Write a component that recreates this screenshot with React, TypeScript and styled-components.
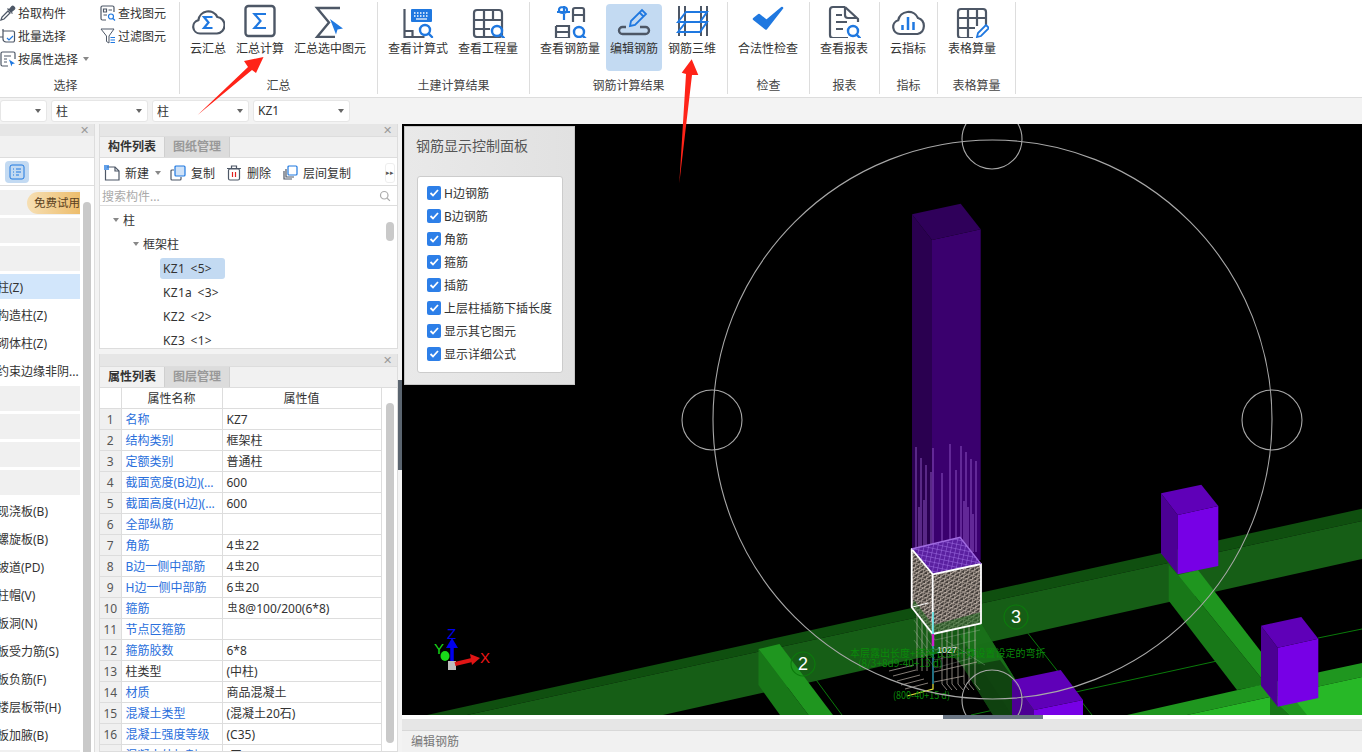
import styled, { createGlobalStyle } from "styled-components";
import type { ReactNode } from "react";

const GRAY = "#4d5766";
const BLUE = "#1f78e0";

const GlobalStyle = createGlobalStyle`
  html, body, #root {
    margin: 0;
    padding: 0;
    height: 100%;
  }
  body {
    overflow: hidden;
    background: #f3f3f3;
    color: #333;
    font-family: "Noto Sans", "Noto Sans CJK SC", sans-serif;
    font-size: 12px;
  }
`;

/* ---------- ribbon icons ---------- */

const Glass = ({ x, y }: { x: number; y: number }) => (
  <g fill="#fff" stroke={BLUE} strokeWidth="2.4">
    <circle cx={x} cy={y} r="5" />
    <path d={`M${x + 3.6} ${y + 3.6}l3.4 3.4`} strokeLinecap="round" />
  </g>
);

const Svg = ({ children }: { children: ReactNode }) => (
  <svg width="34" height="34" viewBox="0 0 34 34" fill="none" stroke={GRAY} strokeWidth="2.2">
    {children}
  </svg>
);

const CloudSumIcon = () => (
  <Svg>
    <path d="M9 29.5a6.8 6.8 0 0 1-1.600-13.400A10 10 0 0 1 26.300 13 8.300 8.300 0 0 1 26 29.500Z" />
    <path d="M21.500 13h-8.500l4.500 5.500-4.500 5.500h8.500" stroke={BLUE} />
  </Svg>
);

const SumIcon = () => (
  <Svg>
    <rect x="2.500" y="2" width="29" height="30" rx="3" strokeWidth="2.400" />
    <path d="M23 10H11.500l6 7-6 7H23" stroke={BLUE} />
  </Svg>
);

const SumSelectedIcon = () => (
  <Svg>
    <path d="M27 4H4l12 14.500L4 33h18" strokeWidth="2.400" />
    <path d="M17 17l13 9.500-5.500 1-1.500 5Z" fill={BLUE} stroke="none" transform="translate(0 -2)" />
  </Svg>
);

const FormulaIcon = () => (
  <Svg>
    <path d="M3.500 5v28h20M3.500 27h8v6" />
    <rect x="10" y="5" width="21" height="13" rx="1" fill={BLUE} stroke="none" />
    <path d="M13 9h15M13 12h15" stroke="#fff" strokeWidth="1.300" strokeDasharray="1.500 1.500" />
    <path d="M15 15h11" stroke="#fff" strokeWidth="1.200" />
    <Glass x={24} y={26} />
  </Svg>
);

const QuantityIcon = () => (
  <Svg>
    <rect x="3" y="6" width="28" height="27" rx="3" />
    <path d="M3 16h28M3 25h16M13 6v27M22 6v10" />
    <Glass x={26} y={27} />
  </Svg>
);

const RebarQtyIcon = () => (
  <Svg>
    <path d="M3 22h13v13M3 22v12h13M3 28h13" />
    <path d="M20 18V6a2 2 0 0 1 2-2h7a2 2 0 0 1 2 2v12M20 11h11" />
    <path d="M11 2v14M4 8h13M6 6c0-4 8-4 8 0s-8 4-8 0Z" stroke={BLUE} strokeWidth="2.200" />
    <Glass x={26} y={28} />
  </Svg>
);

const EditRebarIcon = () => (
  <Svg>
    <path d="M9 24H5.500a3.500 3.500 0 0 0 0 7h23a3.500 3.500 0 0 0 0-7H23" strokeWidth="2.400" transform="translate(0 -1)" />
    <path d="M13 22l1-5L25 6l4 4-11 11ZM22.500 8.500l4 4" stroke={BLUE} strokeWidth="1.800" />
  </Svg>
);

const Rebar3dIcon = () => (
  <Svg>
    <path d="M4 2v30M10 2v8M10 26v6M26 2v30M32 2v30M10 10v16" strokeWidth="2" />
    <path d="M3 18L11 8h21l-7 10ZM3 28l8-10h21l-7 10Z" stroke={BLUE} strokeWidth="2" />
  </Svg>
);

const CheckIcon = () => (
  <Svg>
    <path d="M3 15l12 9.500L31 4 15.500 17 8 11Z" fill={BLUE} stroke={BLUE} strokeWidth="2.500" strokeLinejoin="round" />
  </Svg>
);

const ReportIcon = () => (
  <Svg>
    <path d="M18 3H6a3 3 0 0 0-3 3v25a3 3 0 0 0 3 3h15M18 3l13 12v3M18 3v8a3 3 0 0 0 3 3h9" />
    <path d="M9 11h6M9 18h11M9 25h7" strokeWidth="2" />
    <Glass x={26} y={27} />
  </Svg>
);

const CloudBarsIcon = () => (
  <Svg>
    <path d="M9 30a7 7 0 0 1-1.800-13.700A10.500 10.500 0 0 1 27 14a8.300 8.300 0 0 1-.5 16Z" />
    <path d="M11.500 26v-5M17 26V13M22.500 26v-8" stroke={BLUE} strokeWidth="2.500" />
  </Svg>
);

const SheetIcon = () => (
  <Svg>
    <path d="M31 22V8a3 3 0 0 0-3-3H6a3 3 0 0 0-3 3v23a3 3 0 0 0 3 3h12M3 14h28M3 24h17M13 5v29M22 5v17" />
    <path d="M22 33l1-4 8-8 3 3-8 8Z" fill="#fff" stroke={BLUE} strokeWidth="1.800" />
  </Svg>
);

/* ---------- small icons ---------- */

const Mini = ({ children, size = 16 }: { children: ReactNode; size?: number }) => (
  <svg width={size} height={size} viewBox="0 0 16 16" fill="none" stroke={GRAY} strokeWidth="1.200">
    {children}
  </svg>
);

const PickIcon = () => (
  <Mini>
    <path d="M1 15l1-3 6-6 2 2-6 6Z" strokeWidth="1.300" />
    <path d="M7.500 3.500l5 5M9 5l3-3.500c1-1 3.500 1.500 2.500 2.500L11 7" fill={GRAY} />
  </Mini>
);
const BatchIcon = () => (
  <Mini>
    <path d="M3 3h10a1.500 1.500 0 0 1 1.500 1.500v8A1.500 1.500 0 0 1 13 14H6a3 3 0 0 1-3-3V3Z" />
    <path d="M0 9h3M3 3V1" />
    <path d="M7 10l2 2 4-4" stroke={BLUE} />
  </Mini>
);
const AttrIcon = () => (
  <Mini>
    <path d="M8 15H2.500A1.500 1.500 0 0 1 1 13.500v-11A1.500 1.500 0 0 1 2.500 1h11A1.500 1.500 0 0 1 15 2.500V8" />
    <path d="M4 5h7M4 8h3M4 11h3" />
    <path d="M9 8.500l6 4-2.700.5-.8 2.500Z" fill={BLUE} stroke="none" />
  </Mini>
);
const FindIcon = () => (
  <Mini>
    <path d="M6 15H2.500A1.500 1.500 0 0 1 1 13.500v-11A1.500 1.500 0 0 1 2.500 1h10A1.500 1.500 0 0 1 14 2.500V7" />
    <path d="M3.500 4h3v3h-3ZM8.500 5H12M3.500 10H7" />
    <circle cx="11" cy="11.500" r="2.500" stroke={BLUE} />
    <path d="M13 13.500l2 2" stroke={BLUE} />
  </Mini>
);
const FilterIcon = () => (
  <Mini>
    <path d="M1 1h13L9 8v7l-2.500-1.500V8Z" strokeWidth="1" />
    <path d="M10.500 9.500H15M10.500 12H15M10.500 14.500H15" stroke={BLUE} />
  </Mini>
);
const NewIcon = () => (
  <Mini>
    <path d="M3 2h8l4 4v9H1.500V5" />
    <path d="M11 2v4h4" />
    <path d="M0 0h5v5H0Z" fill={BLUE} stroke="none" opacity="0.7" />
  </Mini>
);
const CopyIcon = () => (
  <Mini>
    <path d="M4 5H2a1 1 0 0 0-1 1v8a1 1 0 0 0 1 1h8a1 1 0 0 0 1-1v-2" />
    <rect x="5" y="1" width="10" height="10" rx="1" fill="#cfe2f8" stroke={BLUE} />
  </Mini>
);
const TrashIcon = () => (
  <Mini>
    <rect x="2.500" y="4" width="11" height="11" rx="1.500" />
    <path d="M1 3.500h14M5.500 3V1h5v2" />
    <path d="M6.500 7v5M9.500 7v5" stroke="#e02020" />
  </Mini>
);
const FloorCopyIcon = () => (
  <Mini>
    <path d="M2 6v8h8M4 4v8h8" />
    <rect x="6" y="1" width="9" height="9" rx="1" fill="#fff" stroke={BLUE} />
  </Mini>
);
const SearchGlass = () => (
  <Mini size={12}>
    <circle cx="7" cy="7" r="5" stroke="#aaa" strokeWidth="1.600" />
    <path d="M11 11l3.500 3.500" stroke="#aaa" strokeWidth="1.600" />
  </Mini>
);
const ListIcon = () => (
  <svg width="16" height="16" viewBox="0 0 16 16" fill="none" stroke={BLUE} strokeWidth="1">
    <rect x="1" y="1" width="14" height="14" rx="2" />
    <path d="M4 5h1M7 5h5M4 8h1M7 8h5M4 11h1M7 11h3" />
  </svg>
);

/* ---------- page ---------- */

const Page = styled.div`
  position: relative;
  display: flex;
  flex-direction: column;
  width: 1362px;
  height: 752px;
  overflow: hidden;
`;

const Ribbon = styled.div`
  display: flex;
  height: 95px;
  padding-top: 2px;
  background: #fff;
  border-bottom: 1px solid #ddd;
  box-sizing: content-box;
`;

const Group = styled.div<{ $width: number }>`
  display: flex;
  flex-direction: column;
  box-sizing: border-box;
  width: ${({ $width }) => $width}px;
  height: 92px;
  padding: 0 6px;
  border-right: 1px solid #ddd;
`;

const GroupItems = styled.div`
  display: flex;
  gap: 2px;
  height: 70px;
  padding-top: 2px;
  flex: none;
`;

const GroupLabel = styled.div<{ $shift?: number }>`
  margin-top: 4px;
  margin-right: ${({ $shift }) => $shift ?? 0}px;
  height: 16px;
  line-height: 16px;
  text-align: center;
  color: #444;
  white-space: nowrap;
`;

const RibbonButton = styled.div<{ $active?: boolean }>`
  display: flex;
  flex-direction: column;
  align-items: center;
  height: 67px;
  padding: 0 4px;
  border-radius: 4px;
  background: ${({ $active }) => ($active ? "#c3daf2" : "transparent")};
  white-space: nowrap;
  & > span {
    margin-top: 3px;
    line-height: 16px;
  }
  & > svg {
    flex: none;
  }
`;

const PickGrid = styled.div`
  display: grid;
  grid-template-columns: 100px 66px;
  grid-auto-rows: 23px;
  margin: -3px 0 0 -6px;
  height: 71px;
  align-content: start;
`;

const PickItem = styled.div<{ $wide?: boolean }>`
  display: flex;
  align-items: center;
  gap: 2px;
  height: 23px;
  white-space: nowrap;
  ${({ $wide }) => $wide && "grid-column: 1 / 3;"}
`;

const Caret = styled.i<{ $color?: string }>`
  display: inline-block;
  flex: none;
  width: 0;
  height: 0;
  border-left: 3px solid transparent;
  border-right: 3px solid transparent;
  border-top: 4px solid ${({ $color }) => $color ?? "#888"};
`;

const ToolCaret = styled(Caret)`
  margin-right: 9px;
`;

const SelectBar = styled.div`
  display: flex;
  align-items: center;
  gap: 4px;
  height: 26px;
  flex: none;
  padding-bottom: 1px;
  box-sizing: border-box;
  background: #f3f3f3;
`;

const Select = styled.div<{ $width: number }>`
  display: flex;
  align-items: center;
  justify-content: space-between;
  box-sizing: border-box;
  width: ${({ $width }) => $width}px;
  height: 22px;
  padding: 0 5px 0 4px;
  background: #fff;
  border: 1px solid #e6e6e6;
  border-radius: 3px;
`;

const Workspace = styled.div`
  display: flex;
  flex: 1;
  min-height: 0;
  gap: 4px;
`;

const LeftColumn = styled.div`
  position: relative;
  display: flex;
  flex-direction: column;
  flex: none;
  width: 95px;
  background: #fff;
  border-right: 1px solid #ddd;
  box-sizing: border-box;
  overflow: hidden;
`;

const PanelHead = styled.div`
  display: flex;
  align-items: center;
  justify-content: flex-end;
  flex: none;
  height: 12px;
  padding-right: 5px;
  background: #e6e6e6;
  color: #999;
`;

const CloseMark = styled.span`
  font-size: 11px;
  line-height: 12px;
  font-family: "Liberation Sans", sans-serif;
`;

const LeftBlank = styled.div`
  flex: none;
  height: 22px;
  background: #f1f1f1;
  border-bottom: 1px solid #ddd;
  box-sizing: border-box;
`;

const LeftTools = styled.div`
  display: flex;
  align-items: center;
  flex: none;
  height: 28px;
  padding-left: 5px;
  border-bottom: 1px solid #ddd;
  box-sizing: border-box;
`;

const ToolChip = styled.div`
  display: flex;
  align-items: center;
  justify-content: center;
  width: 24px;
  height: 22px;
  background: #c3daf2;
  border-radius: 4px;
`;

const NavList = styled.div`
  display: flex;
  flex-direction: column;
  gap: 3px;
  width: 80px;
  padding-top: 4px;
  overflow: hidden;
`;

const NavRow = styled.div<{ $tone?: "blank" | "active" }>`
  display: flex;
  align-items: center;
  flex: none;
  justify-content: space-between;
  height: 25px;
  white-space: nowrap;
  overflow: hidden;
  background: ${({ $tone }) =>
    $tone === "blank" ? "#f0f0f0" : $tone === "active" ? "#d2e6fb" : "#fff"};
  & > span {
    margin-left: -3px;
  }
`;

const TrialPill = styled.div`
  margin-left: auto;
  width: 53px;
  height: 22px;
  line-height: 21px;
  text-align: right;
  font-size: 11.500px;
  border-radius: 11px 0 0 11px;
  background: linear-gradient(90deg, #f6dfb4, #edbd6c);
  color: #5b4120;
  overflow: hidden;
`;

const ScrollThumb = styled.div<{ $top: number; $left: number; $height: number }>`
  position: absolute;
  top: ${({ $top }) => $top}px;
  left: ${({ $left }) => $left}px;
  width: 8px;
  height: ${({ $height }) => $height}px;
  background: #c9c9c9;
  border-radius: 4px;
`;

const MiddleColumn = styled.div`
  display: flex;
  flex-direction: column;
  flex: none;
  width: 299px;
  gap: 5px;
`;

const Panel = styled.div<{ $height?: number }>`
  position: relative;
  display: flex;
  flex-direction: column;
  background: #fff;
  border-right: 1px solid #ddd;
  border-left: 1px solid #ddd;
  border-bottom: 1px solid #ddd;
  box-sizing: border-box;
  overflow: hidden;
  ${({ $height }) => ($height ? `flex: none; height: ${$height}px;` : "flex: 1; min-height: 0;")}
`;

const Tabs = styled.div`
  display: flex;
  flex: none;
  height: 22px;
  background: #f1f1f1;
  border-top: 1px solid #ddd;
  border-bottom: 1px solid #ddd;
  box-sizing: border-box;
`;

const Tab = styled.div<{ $active?: boolean }>`
  width: 65px;
  line-height: 20px;
  text-align: center;
  font-weight: 700;
  color: ${({ $active }) => ($active ? "#333" : "#999")};
  background: ${({ $active }) => ($active ? "#f1f1f1" : "#dcdcdc")};
  border-right: 1px solid #cfcfcf;
  box-sizing: border-box;
`;

const ListTools = styled.div`
  display: flex;
  align-items: center;
  flex: none;
  height: 28px;
  padding: 2px 0 0 4px;
  border-bottom: 1px solid #ddd;
  box-sizing: border-box;
`;

const ListTool = styled.div<{ $gap: number }>`
  display: flex;
  align-items: center;
  gap: 5px;
  margin-right: ${({ $gap }) => $gap}px;
  white-space: nowrap;
`;

const MoreTools = styled.div`
  margin-left: auto;
  margin-right: 2px;
  width: 10px;
  height: 20px;
  line-height: 18px;
  text-align: center;
  font-size: 7px;
  color: #555;
  border: 1px solid #eee;
  border-radius: 3px;
  box-sizing: border-box;
`;

const SearchRow = styled.div`
  display: flex;
  align-items: center;
  justify-content: space-between;
  flex: none;
  height: 19px;
  padding: 0 6px 0 2px;
  color: #aaa;
  border-bottom: 1px solid #ddd;
  box-sizing: content-box;
`;

const Tree = styled.div`
  flex: 1;
  min-height: 0;
  padding-top: 2px;
  overflow: hidden;
`;

const TreeRow = styled.div<{ $indent: number }>`
  display: flex;
  align-items: center;
  gap: 4px;
  height: 24px;
  padding-left: ${({ $indent }) => $indent}px;
`;

const TreeLeaf = styled.div<{ $selected?: boolean }>`
  box-sizing: border-box;
  height: 21px;
  line-height: 21px;
  margin-left: -3px;
  width: 65px;
  padding-left: 3px;
  border-radius: 3px;
  letter-spacing: 0.300px;
  word-spacing: 2px;
  white-space: nowrap;
  background: ${({ $selected }) => ($selected ? "#c3daf2" : "transparent")};
`;

const PropsTable = styled.table`
  width: 281px;
  border-collapse: collapse;
  table-layout: fixed;
`;

const Col = styled.col<{ $width: number }>`
  width: ${({ $width }) => $width}px;
`;

const HeadCell = styled.th`
  height: 20px;
  padding: 0;
  font-weight: 400;
  text-align: center;
  border-right: 1px solid #ddd;
  border-bottom: 1px solid #ddd;
`;

const IndexCell = styled.td`
  height: 20px;
  padding: 0;
  text-align: center;
  color: #555;
  background: #f0f0f0;
  border-right: 1px solid #ddd;
  border-bottom: 1px solid #ddd;
`;

const NameCell = styled.td<{ $plain?: boolean }>`
  height: 20px;
  padding: 0 3px 0 4px;
  white-space: nowrap;
  overflow: hidden;
  text-overflow: ellipsis;
  color: ${({ $plain }) => ($plain ? "#333" : "#2a6fdc")};
  border-right: 1px solid #ddd;
  border-bottom: 1px solid #ddd;
`;

const ValueCell = styled.td`
  height: 20px;
  padding: 0 3px 0 4px;
  white-space: nowrap;
  overflow: hidden;
  border-right: 1px solid #ddd;
  border-bottom: 1px solid #ddd;
`;

const SteelMark = styled.span`
  font-size: 10px;
  position: relative;
  top: -2px;
  margin: 0 1px;
`;

const SplitterV = styled.div`
  position: absolute;
  left: -4px;
  top: 256px;
  width: 4px;
  height: 90px;
  background: #5b6570;
`;

const RightColumn = styled.div`
  position: relative;
  display: flex;
  flex-direction: column;
  flex: 1;
  min-width: 0;
`;

const Viewport = styled.div`
  flex: none;
  height: 591px;
  background: #000;
  & > svg {
    display: block;
  }
`;

const SplitterH = styled.div`
  position: absolute;
  left: 541px;
  top: 591px;
  width: 100px;
  height: 4px;
  background: #6b7785;
`;

const BottomGap = styled.div`
  flex: none;
  height: 4px;
  background: #fff;
`;

const BottomHead = styled.div`
  flex: none;
  height: 11px;
  background: #e6e6e6;
  border-bottom: 1px solid #d8d8d8;
  box-sizing: content-box;
`;

const BottomBody = styled.div`
  flex: 1;
  padding: 1px 9px;
  background: #f1f1f1;
  color: #777;
`;

const FloatPanel = styled.div`
  position: absolute;
  left: 2px;
  top: 2px;
  box-sizing: border-box;
  width: 171px;
  height: 259px;
  padding: 0 12px;
  background: linear-gradient(90deg, #e9e9e9, #e1e1e1);
  border: 1px solid #c8c8c8;
`;

const FloatTitle = styled.div`
  margin: 8px 0 0 -1px;
  height: 21px;
  line-height: 21px;
  font-size: 14px;
  color: #555;
`;

const CheckBox = styled.div`
  display: flex;
  flex-direction: column;
  gap: 4px;
  box-sizing: border-box;
  width: 146px;
  height: 197px;
  margin-top: 20px;
  padding: 6px 0 0 9px;
  background: #fff;
  border: 1px solid #ccc;
  border-radius: 3px;
`;

const CheckRow = styled.div`
  display: flex;
  align-items: center;
  gap: 3px;
  height: 19px;
  white-space: nowrap;
`;

const Tick = styled.div`
  display: flex;
  align-items: center;
  justify-content: center;
  width: 14px;
  height: 14px;
  background: #2d7fe8;
  border-radius: 2px;
`;

const ArrowOverlay = styled.svg`
  position: absolute;
  left: 0;
  top: 0;
  pointer-events: none;
`;

/* ---------- data ---------- */

const navRows: { label?: string; tone?: "blank" | "active"; trial?: boolean }[] = [
  { tone: "blank", trial: true },
  { tone: "blank" },
  { tone: "blank" },
  { label: "柱(Z)", tone: "active" },
  { label: "构造柱(Z)" },
  { label: "砌体柱(Z)" },
  { label: "约束边缘非阴..." },
  { tone: "blank" },
  { tone: "blank" },
  { tone: "blank" },
  { tone: "blank" },
  { label: "现浇板(B)" },
  { label: "螺旋板(B)" },
  { label: "坡道(PD)" },
  { label: "柱帽(V)" },
  { label: "板洞(N)" },
  { label: "板受力筋(S)" },
  { label: "板负筋(F)" },
  { label: "楼层板带(H)" },
  { label: "板加腋(B)" },
  { tone: "blank" },
];

const S = () => <SteelMark>虫</SteelMark>;

const props: { name: string; value?: ReactNode; plain?: boolean }[] = [
  { name: "名称", value: "KZ7" },
  { name: "结构类别", value: "框架柱" },
  { name: "定额类别", value: "普通柱" },
  { name: "截面宽度(B边)(mm)", value: "600" },
  { name: "截面高度(H边)(mm)", value: "600" },
  { name: "全部纵筋" },
  { name: "角筋", value: <>4<S />22</> },
  { name: "B边一侧中部筋", value: <>4<S />20</> },
  { name: "H边一侧中部筋", value: <>6<S />20</> },
  { name: "箍筋", value: <><S />8@100/200(6*8)</> },
  { name: "节点区箍筋" },
  { name: "箍筋胶数", value: "6*8" },
  { name: "柱类型", value: "(中柱)", plain: true },
  { name: "材质", value: "商品混凝土" },
  { name: "混凝土类型", value: "(混凝土20石)" },
  { name: "混凝土强度等级", value: "(C35)" },
  { name: "混凝土外加剂", value: "(无)" },
];

const checks = ["H边钢筋", "B边钢筋", "角筋", "箍筋", "插筋", "上层柱插筋下插长度", "显示其它图元", "显示详细公式"];

const leaves = ["KZ1 <5>", "KZ1a <3>", "KZ2 <2>", "KZ3 <1>"];

const rebarTops = [
  [916, 447], [921, 458], [926, 465], [931, 472], [933, 448], [942, 473], [950, 444],
  [956, 470], [961, 446], [966, 452], [971, 459], [976, 461], [919, 507], [924, 500],
  [964, 501], [968, 507], [973, 514],
];

const hooks = [
  [889, 671, 914, 665], [893, 676, 916, 670], [897, 681, 920, 675], [901, 685, 924, 679],
  [905, 689, 928, 683],
];

/* ---------- 3d view ---------- */

const Scene = () => (
  <svg width="960" height="591" viewBox="402 124 960 591">
    <defs>
      <pattern id="mesh" width="4.500" height="4.500" patternUnits="userSpaceOnUse" patternTransform="rotate(12)">
        <rect width="4.500" height="4.500" fill="#3f3a36" />
        <path d="M0 0H4.500M0 0V4.500M0 4.500L4.500 0" stroke="#c4b7ad" strokeWidth="1" />
      </pattern>
      <pattern id="meshTop" width="4.500" height="4.500" patternUnits="userSpaceOnUse" patternTransform="rotate(12)">
        <rect width="4.500" height="4.500" fill="#5a20a0" />
        <path d="M0 0H4.500M0 0V4.500" stroke="#a675ea" strokeWidth="0.900" />
      </pattern>
    </defs>

    {/* thin grid lines */}
    <g stroke="#0a7a0a" strokeWidth="1">
      <path d="M971 715L1217 661M1318 638L1362 629M1023 627L1092 715M811 673L842 715" />
    </g>

    {/* long beam */}
    <polygon points="427,715 1362,508.700 1362,521 467,715" fill="#0f4f0f" />
    <polygon points="467,715 1362,521 1362,559 663,715" fill="#165e16" />

    {/* cross beam under the cage */}
    <polygon points="933,634 981,623 1037,715 993,715 963,667" fill="#145914" opacity="0.900" />
    <polygon points="981,623 1037,715 1012,715 960,636" fill="#1b7a1b" opacity="0.700" />
    <polygon points="963,667 1000,660 1040,715 993,715" fill="#103f10" opacity="0.900" />

    {/* stub beam by axis 2 */}
    <polygon points="758.500,649 758.500,685 780,715 808.500,715" fill="#187818" />
    <polygon points="758.500,649 779.500,644 833,715 808.500,715" fill="#1f961f" />

    {/* cross beam by axis 4 */}
    <polygon points="1168.700,565 1168.700,600.700 1237,690 1262,685 1262,679 1178,575" fill="#187818" />
    <polygon points="1178,575 1198,570 1262,653 1262,679" fill="#1f961f" />

    {/* front beam */}
    <polygon points="1127,715 1260,685 1362,663 1362,677 1187,715" fill="#1f961f" />
    <polygon points="1187,715 1270,697 1362,677 1362,715" fill="#27b827" />
    <polygon points="1270,697 1270,715 1290,715 1277,703" fill="#187818" />
    <polygon points="1277,703 1290,715 1307,715 1295,700" fill="#1f961f" />

    {/* tall column */}
    <polygon points="912,214.300 932,240 932,560 912,560" fill="#2a0050" />
    <polygon points="932,240 980.700,229.300 980.700,560 932,560" fill="#3a006e" />
    <polygon points="912,214.300 960.700,203.700 980.700,229.300 932,240" fill="#2f005a" />
    <g stroke="#9a5fd0" strokeWidth="1" opacity="0.850">
      {rebarTops.map(([x, y]) => (
        <path key={`${x}-${y}`} d={`M${x} ${y}V552`} />
      ))}
    </g>

    {/* cage below the cube */}
    <g stroke="#b9aea6" strokeWidth="0.800" fill="none" opacity="0.900">
      {[917, 922, 927, 942, 947, 952, 958, 964, 969, 975].map((x) => (
        <path key={x} d={`M${x} 600V${x < 935 ? 665 : 684}l${x < 935 ? 0 : 5} 6`} />
      ))}
      <path d="M934 672L977 662M934 682L964 676" />
      {hooks.map(([a, b, c, d]) => (
        <path key={a} d={`M${a} ${b}L${c} ${d}`} />
      ))}
    </g>
    <g stroke="#cfd9cf" strokeWidth="0.600" fill="none" opacity="0.450">
      <path d="M914 610L935 640L980 630M914 620L935 650L976 640M914 630L935 660L975 650M914 640L935 668L972 658" />
      <path d="M945 640L985 665" />
    </g>

    {/* cube */}
    <polygon points="911.700,549 932.700,574.300 932.700,634 911.700,607.300" fill="url(#mesh)" />
    <polygon points="932.700,574.300 981,564 981,623.300 932.700,634" fill="url(#mesh)" />
    <polygon points="911.700,549 960,537.300 981,564 932.700,574.300" fill="url(#meshTop)" />
    <polygon points="914,600 933,625 981,612 981,623.300 932.700,634 911.700,607.300" fill="#1c6a1c" opacity="0.550" />
    <g fill="none" stroke="#fff" strokeWidth="1.800" strokeLinejoin="round">
      <path d="M911.700 607.300V549L932.700 574.300V634L911.700 607.300ZM932.700 574.300L981 564V623.300L932.700 634" />
      <path d="M911.700 607.300L928 603" strokeWidth="1" />
    </g>
    <path d="M911.700 549L960 537.300L981 564" fill="none" stroke="#a06be0" strokeWidth="1.400" />

    {/* centre line */}
    <path d="M933 612V634" stroke="#27e0e0" strokeWidth="1.200" />
    <path d="M933 634V646" stroke="#d020d0" strokeWidth="2.500" />
    <path d="M933 646V684" stroke="#35b7d8" strokeWidth="1.200" />
    <path d="M933 684V689L907 696" stroke="#e6e63a" strokeWidth="1.200" fill="none" />

    {/* labels */}
    <g fontFamily="Noto Sans CJK SC, sans-serif" fontSize="10" fill="#0a8a0a">
      <text x="850" y="657">本层露出长度+搭接长度计算设置设定的弯折</text>
      <text x="858" y="667">(8/3+8d9-40+13 d)</text>
      <text x="893" y="699" textLength="57" lengthAdjust="spacingAndGlyphs">(800-40+15 d)</text>
    </g>
    <text x="937" y="653" fontFamily="Liberation Sans, sans-serif" fontSize="9" fill="#ddd">1027</text>

    {/* axis numbers */}
    <g fill="none" stroke="#0c7a0c" strokeWidth="1.100">
      <circle cx="803" cy="664" r="12" />
      <circle cx="1016" cy="617" r="12" />
    </g>
    <g fontFamily="Liberation Sans, sans-serif" fontSize="18" fill="#fff" textAnchor="middle">
      <text x="803" y="670">2</text>
      <text x="1016" y="623">3</text>
    </g>

    {/* columns in front */}
    <polygon points="1161,493.300 1177.700,515 1177.700,574.300 1161,553.300" fill="#4c0094" />
    <polygon points="1177.700,515 1218.300,506 1218.300,566 1177.700,574.300" fill="#7700e6" />
    <polygon points="1161,493.300 1201.300,484.700 1218.300,506 1177.700,515" fill="#5f00b8" />
    <polygon points="1261,625.700 1277.700,647.700 1277.700,706.700 1261,685.700" fill="#4c0094" />
    <polygon points="1277.700,647.700 1318.300,638.700 1318.300,698 1277.700,706.700" fill="#7700e6" />
    <polygon points="1261,625.700 1301.300,617 1318.300,638.700 1277.700,647.700" fill="#5f00b8" />
    <polygon points="1012,680 1034,710 1034,715 1012,715" fill="#4c0094" />
    <polygon points="1034,710 1083,700 1083,715 1034,715" fill="#7700e6" />
    <polygon points="1012,680 1060.700,670 1083,700 1034,710" fill="#5f00b8" />

    {/* big circle and column markers, over everything */}
    <g fill="none" stroke="#a8a8a8" strokeWidth="1.100">
      <circle cx="992.500" cy="419.500" r="279.500" />
      <circle cx="992" cy="139" r="30" />
      <circle cx="712" cy="420" r="30" />
      <circle cx="1272" cy="420" r="30" />
      <circle cx="992" cy="700" r="30" />
    </g>

    {/* axis gizmo */}
    <rect x="448" y="661" width="8" height="9" fill="#bdbdbd" />
    <path d="M452 661V646" stroke="#0000ee" strokeWidth="3.500" />
    <path d="M446 648L452 638L458 648Z" fill="#0000ee" />
    <path d="M455 664L472 660" stroke="#e01515" strokeWidth="4" />
    <path d="M470 654L480 658L472 665Z" fill="#e01515" />
    <ellipse cx="445" cy="656" rx="4.500" ry="5" fill="#19d819" />
    <g fontFamily="Liberation Sans, sans-serif" fontSize="15">
      <text x="447" y="639" fill="#0000ee">Z</text>
      <text x="434" y="654" fill="#19d819">Y</text>
      <text x="480" y="663" fill="#ee1515">X</text>
    </g>
  </svg>
);

/* ---------- app ---------- */

export default function App() {
  return (
    <Page>
      <GlobalStyle />
      <Ribbon>
        <Group $width={180}>
          <GroupItems>
            <PickGrid>
              <PickItem><PickIcon />拾取构件</PickItem>
              <PickItem><FindIcon />查找图元</PickItem>
              <PickItem><BatchIcon />批量选择</PickItem>
              <PickItem><FilterIcon />过滤图元</PickItem>
              <PickItem $wide><AttrIcon />按属性选择&nbsp;<Caret /></PickItem>
            </PickGrid>
          </GroupItems>
          <GroupLabel $shift={48}>选择</GroupLabel>
        </Group>
        <Group $width={198}>
          <GroupItems>
            <RibbonButton><CloudSumIcon /><span>云汇总</span></RibbonButton>
            <RibbonButton><SumIcon /><span>汇总计算</span></RibbonButton>
            <RibbonButton><SumSelectedIcon /><span>汇总选中图元</span></RibbonButton>
          </GroupItems>
          <GroupLabel>汇总</GroupLabel>
        </Group>
        <Group $width={152}>
          <GroupItems>
            <RibbonButton><FormulaIcon /><span>查看计算式</span></RibbonButton>
            <RibbonButton><QuantityIcon /><span>查看工程量</span></RibbonButton>
          </GroupItems>
          <GroupLabel>土建计算结果</GroupLabel>
        </Group>
        <Group $width={198}>
          <GroupItems>
            <RibbonButton><RebarQtyIcon /><span>查看钢筋量</span></RibbonButton>
            <RibbonButton $active><EditRebarIcon /><span>编辑钢筋</span></RibbonButton>
            <RibbonButton><Rebar3dIcon /><span>钢筋三维</span></RibbonButton>
          </GroupItems>
          <GroupLabel>钢筋计算结果</GroupLabel>
        </Group>
        <Group $width={82}>
          <GroupItems>
            <RibbonButton><CheckIcon /><span>合法性检查</span></RibbonButton>
          </GroupItems>
          <GroupLabel>检查</GroupLabel>
        </Group>
        <Group $width={70}>
          <GroupItems>
            <RibbonButton><ReportIcon /><span>查看报表</span></RibbonButton>
          </GroupItems>
          <GroupLabel>报表</GroupLabel>
        </Group>
        <Group $width={58}>
          <GroupItems>
            <RibbonButton><CloudBarsIcon /><span>云指标</span></RibbonButton>
          </GroupItems>
          <GroupLabel>指标</GroupLabel>
        </Group>
        <Group $width={78}>
          <GroupItems>
            <RibbonButton><SheetIcon /><span>表格算量</span></RibbonButton>
          </GroupItems>
          <GroupLabel>表格算量</GroupLabel>
        </Group>
      </Ribbon>

      <SelectBar>
        <Select $width={47}><span /><Caret $color="#666" /></Select>
        <Select $width={97}>柱<Caret $color="#666" /></Select>
        <Select $width={97}>柱<Caret $color="#666" /></Select>
        <Select $width={97}>KZ1<Caret $color="#666" /></Select>
      </SelectBar>

      <Workspace>
        <LeftColumn>
          <PanelHead><CloseMark>✕</CloseMark></PanelHead>
          <LeftBlank />
          <LeftTools><ToolChip><ListIcon /></ToolChip></LeftTools>
          <NavList>
            {navRows.map((row, i) => (
              <NavRow key={i} $tone={row.tone}>
                {row.label && <span>{row.label}</span>}
                {row.trial && <TrialPill>免费试用</TrialPill>}
              </NavRow>
            ))}
          </NavList>
          <ScrollThumb $top={78} $left={83} $height={560} />
        </LeftColumn>

        <MiddleColumn>
          <Panel $height={225}>
            <PanelHead><CloseMark>✕</CloseMark></PanelHead>
            <Tabs>
              <Tab $active>构件列表</Tab>
              <Tab>图纸管理</Tab>
            </Tabs>
            <ListTools>
              <ListTool $gap={6}><NewIcon />新建</ListTool>
              <ToolCaret />
              <ListTool $gap={11}><CopyIcon />复制</ListTool>
              <ListTool $gap={11}><TrashIcon />删除</ListTool>
              <ListTool $gap={0}><FloorCopyIcon />层间复制</ListTool>
              <MoreTools>▸▸</MoreTools>
            </ListTools>
            <SearchRow>搜索构件...<SearchGlass /></SearchRow>
            <Tree>
              <TreeRow $indent={13}><Caret />柱</TreeRow>
              <TreeRow $indent={33}><Caret />框架柱</TreeRow>
              {leaves.map((leaf, i) => (
                <TreeRow key={leaf} $indent={63}>
                  <TreeLeaf $selected={i === 0}>{leaf}</TreeLeaf>
                </TreeRow>
              ))}
            </Tree>
            <ScrollThumb $top={98} $left={286} $height={19} />
          </Panel>

          <Panel>
            <PanelHead><CloseMark>✕</CloseMark></PanelHead>
            <Tabs>
              <Tab $active>属性列表</Tab>
              <Tab>图层管理</Tab>
            </Tabs>
            <PropsTable>
              <colgroup>
                <Col $width={21} />
                <Col $width={101} />
                <Col $width={159} />
              </colgroup>
              <thead>
                <tr>
                  <HeadCell />
                  <HeadCell>属性名称</HeadCell>
                  <HeadCell>属性值</HeadCell>
                </tr>
              </thead>
              <tbody>
                {props.map((row, i) => (
                  <tr key={row.name}>
                    <IndexCell>{i + 1}</IndexCell>
                    <NameCell $plain={row.plain}>{row.name}</NameCell>
                    <ValueCell>{row.value}</ValueCell>
                  </tr>
                ))}
              </tbody>
            </PropsTable>
            <ScrollThumb $top={49} $left={286} $height={340} />
          </Panel>
        </MiddleColumn>

        <RightColumn>
          <Viewport><Scene /></Viewport>
          <BottomGap />
          <BottomHead />
          <BottomBody>编辑钢筋</BottomBody>
          <SplitterV />
          <SplitterH />
          <FloatPanel>
            <FloatTitle>钢筋显示控制面板</FloatTitle>
            <CheckBox>
              {checks.map((c) => (
                <CheckRow key={c}>
                  <Tick>
                    <svg width="10" height="10" viewBox="0 0 10 10" fill="none" stroke="#fff" strokeWidth="1.800">
                      <path d="M1.500 5l2.500 2.500 5-5.500" />
                    </svg>
                  </Tick>
                  {c}
                </CheckRow>
              ))}
            </CheckBox>
          </FloatPanel>
        </RightColumn>
      </Workspace>

      <ArrowOverlay width="1362" height="752" viewBox="0 0 1362 752">
        <polygon points="197.600,115 248,67 244,61 263.500,57 256,73 252,70" fill="#ff2318" />
        <polygon points="679.300,183.300 686,74 681.700,72.700 691.700,59.300 698.300,75 692,75" fill="#ff2318" />
      </ArrowOverlay>
    </Page>
  );
}
